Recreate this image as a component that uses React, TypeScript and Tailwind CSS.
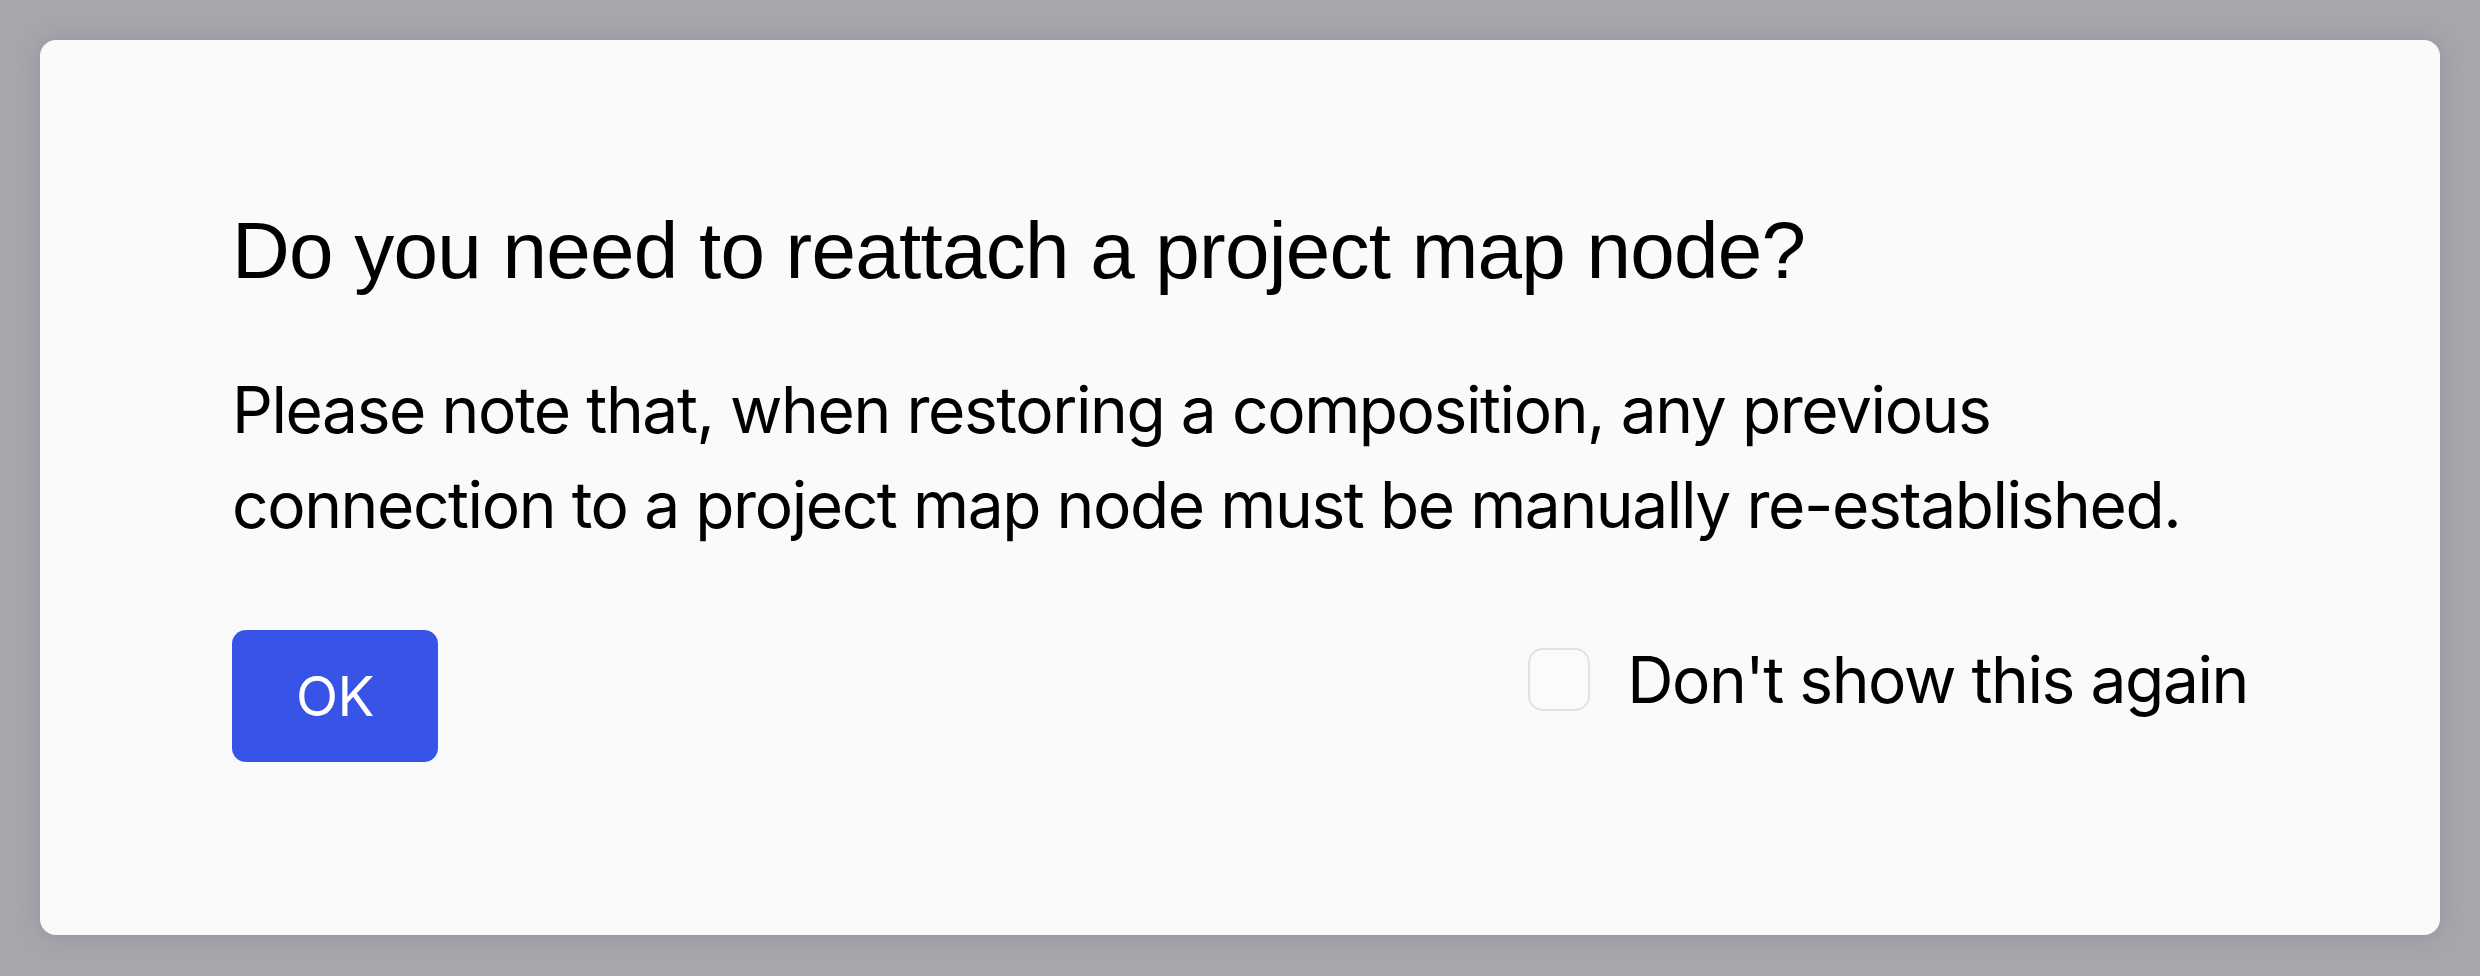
import React from "react";

export default function App() {
  return (
    <div className="w-[2480px] h-[976px] bg-[#a6a7ac] flex items-start justify-center pt-[40px]">
      <div className="w-[2400px] h-[895px] bg-[#fafafa] rounded-[16px] shadow-[0_0_24px_rgba(0,0,0,0.12)] pt-[163px] px-[192px] flex flex-col">
        <h1
          className="text-[80px] leading-[96px] text-black font-normal tracking-[-0.75px] whitespace-nowrap"
          style={{ fontFamily: '"Liberation Sans", Arial, Helvetica, sans-serif' }}
        >
          Do you need to reattach a project map node?
        </h1>
        <p
          className="mt-[63px] text-[64px] leading-[95px] text-black tracking-[-1.4px] whitespace-nowrap"
          style={{ fontFamily: 'Inter, "Noto Sans", sans-serif' }}
        >
          Please note that, when restoring a composition, any previous
          <br />
          connection to a project map node must be manually re-established.
        </p>
        <div className="mt-[78px] flex justify-between items-start">
          <button
            className="w-[206px] h-[132px] rounded-[14px] bg-[#3754e6] text-white text-[55px] tracking-[-0.5px] flex items-center justify-center"
            style={{ fontFamily: 'Inter, "Noto Sans", sans-serif' }}
          >
            OK
          </button>
          <label className="mt-[18px] flex items-center gap-[37px]">
            <span className="w-[62px] h-[63px] rounded-[15px] border-2 border-[#e2e2e2] bg-[#fbfbfb] block" />
            <span
              className="text-[64px] leading-[62px] text-black tracking-[-1.4px] whitespace-nowrap"
              style={{ fontFamily: 'Inter, "Noto Sans", sans-serif' }}
            >
              Don't show this again
            </span>
          </label>
        </div>
      </div>
    </div>
  );
}
